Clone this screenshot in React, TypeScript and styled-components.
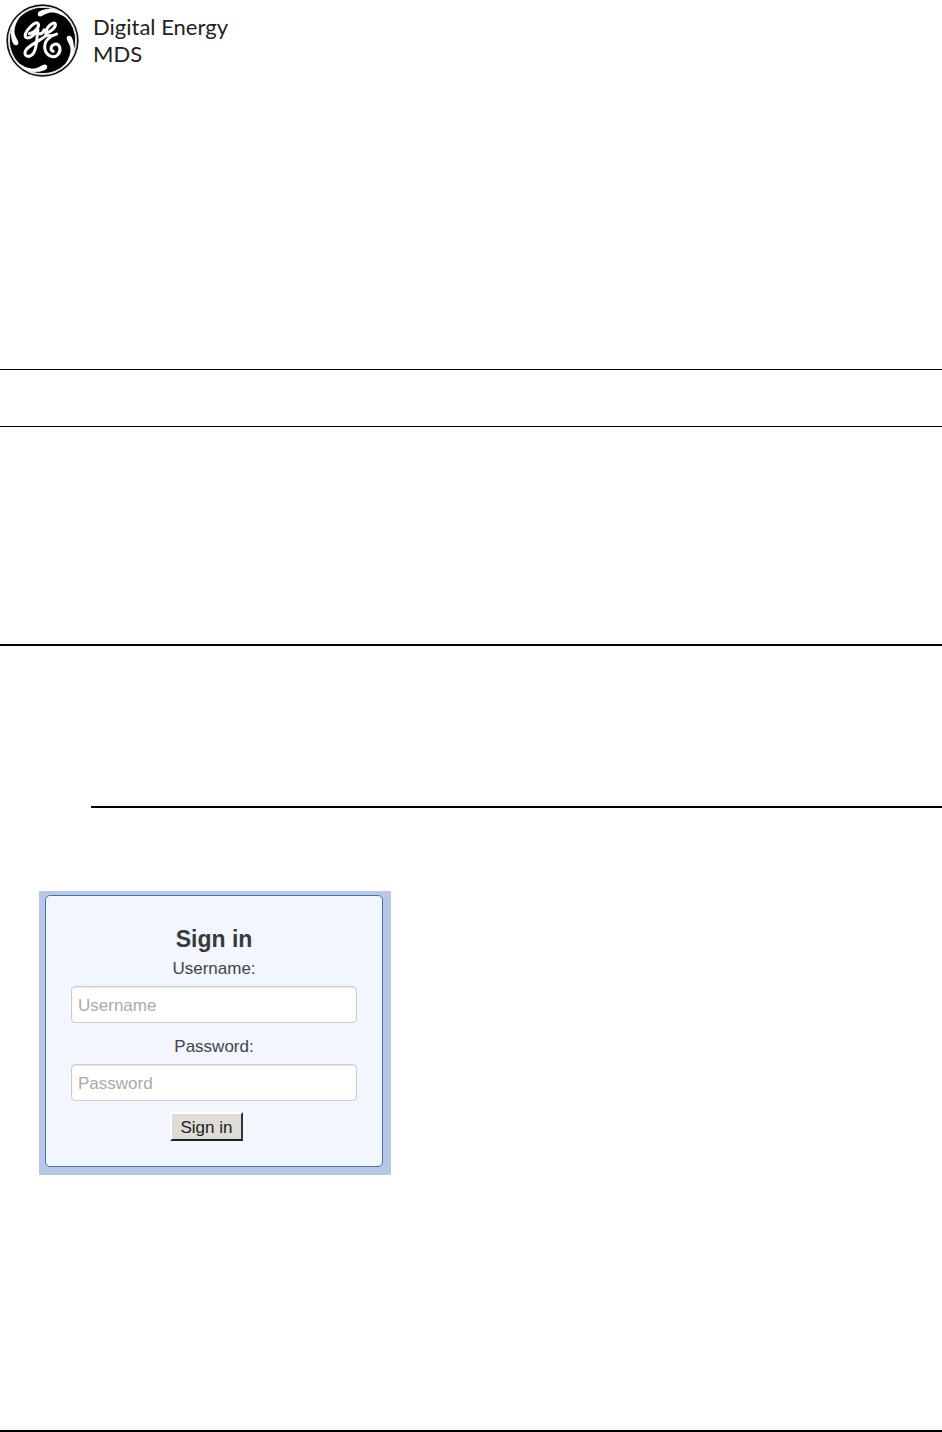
import React from "react";
import styled, { createGlobalStyle } from "styled-components";

const GlobalStyle = createGlobalStyle`
  *, *::before, *::after { box-sizing: border-box; }
  body {
    margin: 0;
    background: #fff;
    color: #333;
    font-family: "Liberation Sans", Arial, sans-serif;
  }
`;

const Page = styled.div`
  display: flex;
  flex-direction: column;
`;

const Header = styled.header`
  display: flex;
  align-items: flex-start;
  gap: 14px;
  padding: 4px 6px 0;
  min-height: 369px;
`;

const Logo = styled.svg`
  display: block;
  flex: none;
  width: 73px;
  height: 73px;
`;

const BrandText = styled.div`
  padding-top: 9px;
  color: #222;
  font-family: Lato, sans-serif;
  font-size: 22px;
  line-height: 27px;
`;

const Band = styled.section<{ $height: number }>`
  height: ${(p) => p.$height}px;
`;

const Rule = styled.hr<{ $weight?: number; $indent?: number }>`
  width: auto;
  height: ${(p) => p.$weight ?? 1}px;
  margin: 0 0 0 ${(p) => p.$indent ?? 0}px;
  border: 0;
  background: #000;
`;

const Main = styled.main`
  display: flex;
  align-items: flex-start;
  min-height: 622px;
  padding: 83px 39px 0;
`;

const Frame = styled.div`
  width: 352px;
  padding: 4px 8px 8px 6px;
  background: #b8c8e4;
`;

const Card = styled.form`
  display: flex;
  flex-direction: column;
  align-items: center;
  padding: 27px 25px 25px;
  border: 1px solid #4a6db5;
  border-radius: 5px;
  background: #f1f6ff;
`;

const Title = styled.h1`
  margin: 0 0 1px;
  color: #393939;
  font-size: 23px;
  line-height: 32px;
`;

const Field = styled.div`
  display: flex;
  flex-direction: column;
  width: 100%;
  margin-bottom: 11px;
`;

const Label = styled.label`
  margin-bottom: 4px;
  color: #444;
  font-size: 17px;
  line-height: 26px;
  text-align: center;
`;

const Input = styled.input`
  width: 100%;
  height: 37px;
  padding: 2px 6px 0;
  border: 1px solid #ccc;
  border-radius: 4px;
  background: #fff;
  box-shadow: inset 0 1px 2px rgba(0, 0, 0, 0.1);
  color: #444;
  font: 17px "Liberation Sans", Arial, sans-serif;

  &::placeholder {
    color: #aaa;
    opacity: 1;
  }
`;

const Submit = styled.button`
  height: 29px;
  margin-right: 15px;
  padding: 2px 9px 0;
  border: 2px solid;
  border-color: #fff #333 #222 #fff;
  background: #dddcd7;
  color: #222;
  font: 17px "Liberation Sans", Arial, sans-serif;
`;

const Emblem = () => (
  <Logo viewBox="-109 -109 218 218" role="img" aria-label="GE">
    <circle r="108" fill="#111" />
    <circle r="100" fill="none" stroke="#e4e4e4" strokeWidth="6" />
    <circle r="97" fill="#000" />
    {[0, 90, 180, 270].map((angle) => (
      <path
        key={angle}
        transform={`rotate(${angle})`}
        d="M-14-80C-14-89 4-94 24-94C48-92 66-83 80-61C58-78 38-86 20-83C8-80 1-73-6-72C-12-72-15-75-14-80Z"
        fill="#fff"
      />
    ))}
    <g
      transform="translate(-61 -60)"
      fill="none"
      stroke="#fff"
      strokeWidth="9"
      strokeLinecap="round"
      strokeLinejoin="round"
    >
      <path d="M22 40C34 38 51 22 49 12C46 2 34 10 25 19C13 31 5 45 12 51C22 56 37 42 47 28C42 42 58 46 66 28" />
      <path d="M47 30C43 52 46 80 34 98C24 112 6 110 9 94C13 76 50 64 70 46" />
      <path d="M72 38C86 34 103 19 99 10C92 1 69 24 71 40C74 50 90 46 103 41C82 46 65 62 68 84C72 108 96 115 108 101C120 85 110 69 98 71C85 74 83 89 93 92" />
    </g>
  </Logo>
);

export default function App() {
  return (
    <>
      <GlobalStyle />
      <Page>
        <Header>
          <Emblem />
          <BrandText>
            Digital Energy
            <br />
            MDS
          </BrandText>
        </Header>
        <Rule />
        <Band $height={56} />
        <Rule />
        <Band $height={217} />
        <Rule $weight={2} />
        <Band $height={160} />
        <Rule $weight={2} $indent={91} />
        <Main>
          <Frame>
            <Card onSubmit={(e: React.FormEvent) => e.preventDefault()}>
              <Title>Sign in</Title>
              <Field>
                <Label htmlFor="username">Username:</Label>
                <Input id="username" type="text" placeholder="Username" />
              </Field>
              <Field>
                <Label htmlFor="password">Password:</Label>
                <Input id="password" type="password" placeholder="Password" />
              </Field>
              <Submit type="submit">Sign in</Submit>
            </Card>
          </Frame>
        </Main>
        <Rule $weight={2} />
      </Page>
    </>
  );
}
